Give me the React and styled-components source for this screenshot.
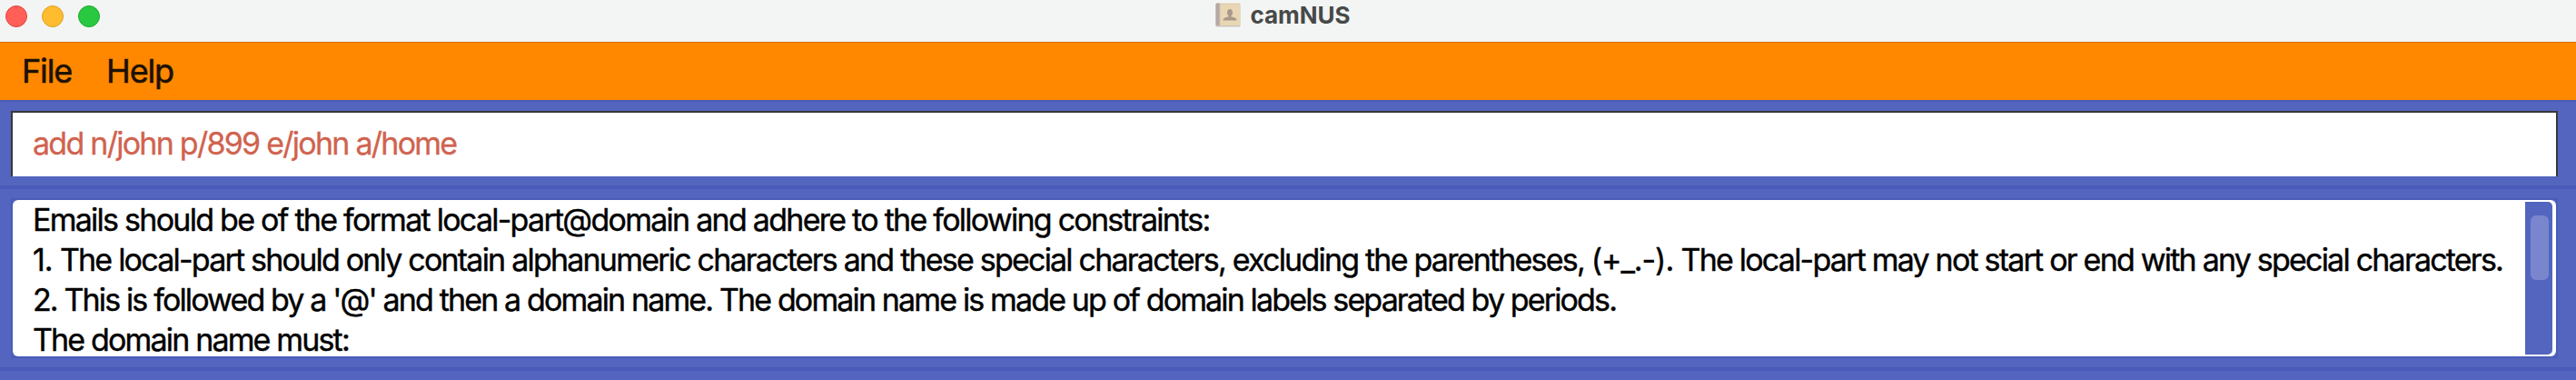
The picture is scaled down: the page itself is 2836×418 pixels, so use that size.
import React from "react";
import styled, { createGlobalStyle } from "styled-components";

const GlobalStyle = createGlobalStyle`
  * { box-sizing: border-box; }
  body {
    margin: 0;
    background: #5365be;
    font-family: Inter, "Liberation Sans", sans-serif;
    overflow: hidden;
  }
`;

const Window = styled.div`
  display: flex;
  flex-direction: column;
  width: 100%;
  height: 418px;
  overflow: hidden;
  background: #5365be;
`;

const TitleBar = styled.header`
  display: grid;
  grid-template-columns: 1fr auto 1fr;
  align-items: start;
  flex: none;
  height: 46px;
  padding-right: 11px;
  background: #f3f5f4;
`;

const TrafficLights = styled.div`
  display: flex;
  gap: 16px;
  padding: 6px 0 0 6px;
`;

const Light = styled.span`
  width: 24px;
  height: 24px;
  border-radius: 50%;
  background: ${(p) => p.$fill};
  border: 1px solid ${(p) => p.$edge};
`;

const Title = styled.div`
  display: flex;
  align-items: center;
  height: 33px;
  color: #474949;
  font-size: 26px;
  font-weight: 700;
  line-height: 33px;
`;

const BookIcon = styled.svg`
  width: 28px;
  height: 27px;
  margin-right: 10px;
`;

const MenuBar = styled.nav`
  display: flex;
  align-items: center;
  flex: none;
  height: 64px;
  padding-left: 24px;
  gap: 38px;
  background: #ff8800;
  box-shadow: inset 0 1px 0 #d96c08;
`;

const MenuItem = styled.span`
  color: #1c1103;
  font-size: 36px;
  line-height: 44px;
  letter-spacing: -1.15px;
  -webkit-text-stroke: 0.6px #1c1103;
`;

const Section = styled.section`
  flex: none;
  height: ${(p) => p.$height}px;
  padding: 10px 20px 0 12px;
`;

const CommandSection = styled(Section)`
  border-top: 2px solid #4a5cb9;
`;

const Divider = styled.div`
  flex: none;
  height: 4px;
  background: #485bb8;
`;

const CommandField = styled.div`
  height: 72px;
  padding: 12px 0 0 22px;
  border: solid #383838;
  border-width: 2px 2px 0 2px;
  background: #fff;
  color: #d0634f;
  font-size: 34px;
  line-height: 44px;
  letter-spacing: -1.745px;
  white-space: pre;
  -webkit-text-stroke: 0.3px #d0634f;
`;

const ResultFrame = styled.div`
  height: 176px;
  border: 2px solid #4a5cb9;
`;

const ResultPane = styled.div`
  display: flex;
  justify-content: space-between;
  height: 172px;
  border-radius: 6px;
  background: #fff;
`;

const ResultText = styled.div`
  padding-left: 22px;
  color: #000;
  font-size: 34px;
  line-height: 44px;
  -webkit-text-stroke: 0.4px #000;
`;

const Line = styled.div`
  white-space: pre;
  letter-spacing: ${(p) => p.$tracking}px;
`;

const Loose = styled.span`
  letter-spacing: -1.1px;
`;

const ScrollTrack = styled.div`
  flex: none;
  width: 30px;
  height: 168px;
  margin: 2px 4px 2px 0;
  padding: 15px 4px 0 6px;
  border-radius: 0 5px 5px 0;
  background: #5365be;
`;

const ScrollThumb = styled.div`
  height: 71px;
  border-radius: 6px;
  background: #7985cd;
`;

export default function App() {
  return (
    <Window>
      <GlobalStyle />
      <TitleBar>
        <TrafficLights>
          <Light $fill="#ff5f57" $edge="#e0443e" />
          <Light $fill="#febc2e" $edge="#dea123" />
          <Light $fill="#28c840" $edge="#1aab29" />
        </TrafficLights>
        <Title>
          <BookIcon viewBox="0 0 28 27">
            <rect x="0.5" y="1" width="27" height="25.5" rx="1.5" fill="#c9c3be" />
            <rect x="0.5" y="0.5" width="27" height="24.5" rx="1.5" fill="#e9d6b4" />
            <path d="M5 1h22v1H5z" fill="#dccbb0" />
            <path d="M1.5 .5H5V25H1.5A1 1 0 0 1 .5 24V1.5A1 1 0 0 1 1.5 .5z" fill="#b5a8a5" />
            <path d="M4.5 .5h1V25h-1z" fill="#cfc0b0" />
            <ellipse cx="16" cy="10.8" rx="3" ry="3.8" fill="#a8998b" />
            <path d="M14.5 13h3v2.500c4 .8 5.800 1.500 6 4H8.500c.2-2.500 2-3.200 6-4z" fill="#a8998b" />
          </BookIcon>
          camNUS
        </Title>
      </TitleBar>
      <MenuBar>
        <MenuItem>File</MenuItem>
        <MenuItem>Help</MenuItem>
      </MenuBar>
      <CommandSection $height={94}>
        <CommandField>add n/john p/899 e/john a/home</CommandField>
      </CommandSection>
      <Divider />
      <Section $height={196}>
        <ResultFrame>
          <ResultPane>
            <ResultText>
              <Line $tracking={-1.74}>
                Emails should be of the format local-part@domain and adhere to the following constraints:
              </Line>
              <Line $tracking={-1.79}>
                <Loose>1. </Loose>
                The local-part should only contain alphanumeric characters and these special characters, excluding the parentheses,{" "}
                <Loose>(+_.-). </Loose>
                The local-part may not start or end with any special characters.
              </Line>
              <Line $tracking={-1.861}>
                2. This is followed by a '@' and then a domain name. The domain name is made up of domain labels separated by periods.
              </Line>
              <Line $tracking={-1.84}>The domain name must:</Line>
            </ResultText>
            <ScrollTrack>
              <ScrollThumb />
            </ScrollTrack>
          </ResultPane>
        </ResultFrame>
      </Section>
      <Divider />
    </Window>
  );
}
